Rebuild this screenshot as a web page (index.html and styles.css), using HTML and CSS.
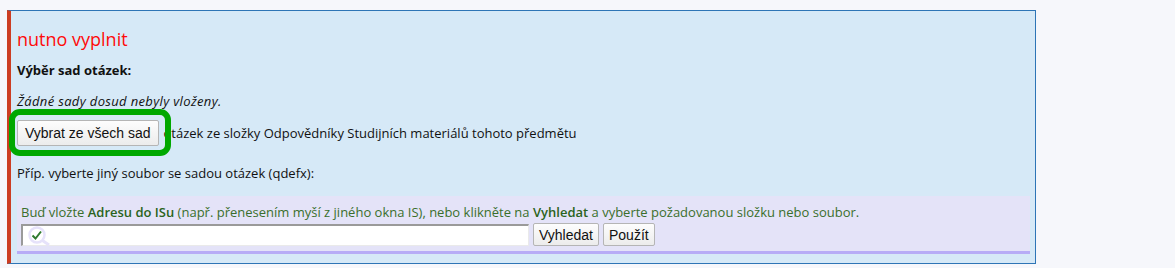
FILE: index.html
```html
<!DOCTYPE html>
<html lang="cs">
<head>
    <meta charset="UTF-8">
    <title>Výběr sad otázek</title>
    <link rel="stylesheet" href="styles.css">
</head>
<body>
    <div class="form-box">
        <div class="required">nutno vyplnit</div>
        <div class="label">Výběr sad otázek:</div>
        <div class="empty-note">Žádné sady dosud nebyly vloženy.</div>

        <div class="pick-row">
            <span class="pick-wrap">
                <button class="btn">Vybrat ze všech sad</button>
                <span class="highlight"></span>
            </span>
            <span class="pick-text">otázek ze složky Odpovědníky Studijních materiálů tohoto předmětu</span>
        </div>

        <div class="alt-note">Příp. vyberte jiný soubor se sadou otázek (qdefx):</div>

        <div class="address-panel">
            <div class="address-help">
                Buď vložte <b>Adresu do ISu</b> (např. přenesením myší z jiného okna IS), nebo klikněte na <b>Vyhledat</b> a vyberte požadovanou složku nebo soubor.
            </div>
            <div class="address-row">
                <span class="address-input-wrap">
                    <input class="address-input" type="text">
                    <svg class="input-icon" width="30" height="20" viewBox="0 0 30 20">
                        <circle cx="12" cy="9" r="7.5" fill="none" stroke="#e6e2fa" stroke-width="2.5"/>
                        <line x1="17.5" y1="14.5" x2="24" y2="19" stroke="#e6e2fa" stroke-width="3"/>
                        <path d="M7.5 9.5 L10.5 12.5 L16 5.5" fill="none" stroke="#2f7a2f" stroke-width="2"/>
                    </svg>
                </span>
                <button class="btn btn-small">Vyhledat</button>
                <button class="btn btn-small">Použít</button>
            </div>
        </div>
    </div>
</body>
</html>
```

FILE: styles.css
```css
body {
    margin: 0;
    padding: 10px 0 0 7px;
    background-color: #f6f7fb;
    font-family: "Open Sans", sans-serif;
    font-size: 13px;
    color: #111;
}

.form-box {
    box-sizing: border-box;
    width: 1029px;
    height: 254px;
    background: #d6e9f7;
    border: 1px solid #2e75b6;
    border-left: 4px solid #cc3d22;
    padding: 0 5px 0 6px;
}

.required {
    color: #ff0a0a;
    font-size: 18px;
    line-height: 28px;
    margin-top: 14px;
}

.label {
    font-weight: bold;
    line-height: 18px;
    margin-top: 8px;
}

.empty-note {
    font-style: italic;
    letter-spacing: 0.35px;
    line-height: 18px;
    margin-top: 13px;
}

.pick-row {
    display: flex;
    align-items: center;
    margin-top: 9px;
    height: 28px;
}

.pick-wrap {
    position: relative;
    display: inline-block;
}

.highlight {
    position: absolute;
    left: -8px;
    top: -11px;
    right: -12px;
    bottom: -10px;
    border: 6px solid #00a800;
    border-radius: 11px;
}

.pick-text {
    margin-left: 5px;
}

.btn {
    font-family: "Liberation Sans", Arial, sans-serif;
    font-size: 14px;
    color: #111;
    background: linear-gradient(#fdfdfd, #ececec);
    border: 1px solid #b5b5b5;
    border-radius: 2px;
    padding: 0 7px;
    height: 26px;
}

.alt-note {
    line-height: 18px;
    margin-top: 17px;
}

.address-panel {
    background: #e4e3f8;
    border-bottom: 3px solid #b7acf6;
    margin-top: 14px;
    padding: 7px 4px 5px 4px;
}

.address-help {
    color: #3a6f2c;
    line-height: 18px;
}

.address-help b {
    color: #2b6320;
    font-weight: 600;
}

.address-row {
    display: flex;
    align-items: center;
    gap: 4px;
    margin-top: 2px;
}

.address-input-wrap {
    position: relative;
    display: inline-block;
}

.address-input {
    width: 508px;
    height: 22px;
    box-sizing: border-box;
    border: none;
    border-top: 2px solid #9a9a9a;
    border-left: 2px solid #9a9a9a;
    border-bottom: 1px solid #eaeaea;
    border-right: 1px solid #eaeaea;
    background: #fff;
    padding: 0;
    margin: 0;
}

.input-icon {
    position: absolute;
    left: 4px;
    top: 2px;
}

.btn-small {
    height: 23px;
    padding: 0 5px;
}
```
